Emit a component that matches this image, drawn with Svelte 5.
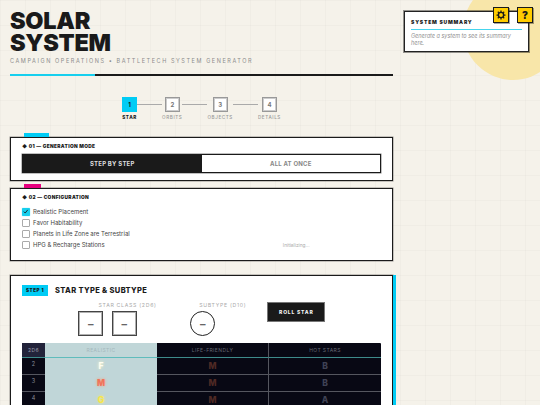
<script>
  const steps = [
    { n: 1, label: 'STAR', active: true },
    { n: 2, label: 'ORBITS' },
    { n: 3, label: 'OBJECTS' },
    { n: 4, label: 'DETAILS' }
  ];
  const options = [
    { label: 'Realistic Placement', checked: true },
    { label: 'Favor Habitability' },
    { label: 'Planets in Life Zone are Terrestrial' },
    { label: 'HPG & Recharge Stations' }
  ];
  const rows = [
    { roll: 2, a: 'F', ac: 'f', b: 'M', c: 'B' },
    { roll: 3, a: 'M', ac: 'm', b: 'M', c: 'B' },
    { roll: 4, a: 'G', ac: 'g', b: 'M', c: 'A' }
  ];
</script>

<div class="page">
  <div class="sun"></div>

  <aside class="summary">
    <h3>SYSTEM SUMMARY</h3>
    <p>Generate a system to see its summary here.</p>
  </aside>
  <button class="fab gear" aria-label="Settings">
    <svg viewBox="0 0 16 16" width="10" height="10">
      <circle cx="8" cy="8" r="4.2" fill="none" stroke="#1a1a1a" stroke-width="2.2" />
      <g stroke="#1a1a1a" stroke-width="2">
        <path d="M8 0.8v2.4M8 12.8v2.4M0.8 8h2.4M12.8 8h2.4M2.9 2.9l1.7 1.7M11.4 11.4l1.7 1.7M2.9 13.1l1.7-1.7M11.4 4.6l1.7-1.7" />
      </g>
    </svg>
  </button>
  <button class="fab help">?</button>

  <main class="main">
    <header class="head">
      <h1>SOLAR<br />SYSTEM</h1>
      <p class="sub">CAMPAIGN OPERATIONS • BATTLETECH SYSTEM GENERATOR</p>
      <div class="rule"><span></span></div>
    </header>

    <nav class="stepper">
      {#each steps as s, i}
        {#if i > 0}<div class="link"></div>{/if}
        <div class="step" class:active={s.active}>
          <div class="box">{s.n}</div>
          <div class="lab">{s.label}</div>
        </div>
      {/each}
    </nav>

    <section class="panel first">
      <i class="tab cyan"></i>
      <h2>◆ 01 — GENERATION MODE</h2>
      <div class="toggle">
        <div class="seg on">STEP BY STEP</div>
        <div class="seg">ALL AT ONCE</div>
      </div>
    </section>

    <section class="panel second">
      <i class="tab pink"></i>
      <h2>◆ 02 — CONFIGURATION</h2>
      <div class="config">
        <ul>
          {#each options as o}
            <li>
              <span class="cb" class:checked={o.checked}>
                {#if o.checked}
                  <svg viewBox="0 0 10 10" width="7" height="7"><path d="M1.5 5.2 4 7.8 8.6 2" fill="none" stroke="#1a1a1a" stroke-width="1.6" /></svg>
                {/if}
              </span>
              {o.label}
            </li>
          {/each}
        </ul>
        <span class="init">Initializing...</span>
      </div>
    </section>

    <section class="panel third">
      <div class="title"><span class="badge">STEP 1</span><h3>STAR TYPE &amp; SUBTYPE</h3></div>
      <div class="dice">
        <div class="group g1">
          <div class="cap">STAR CLASS (2D6)</div>
          <div class="pair"><div class="die">–</div><div class="die">–</div></div>
        </div>
        <div class="group g2">
          <div class="cap">SUBTYPE (D10)</div>
          <div class="pair"><div class="die round">–</div></div>
        </div>
        <button class="roll">ROLL STAR</button>
      </div>
      <div class="table">
        <div class="cell hd num">2D6</div>
        <div class="cell hd real">REALISTIC</div>
        <div class="cell hd">LIFE-FRIENDLY</div>
        <div class="cell hd">HOT STARS</div>
        {#each rows as r}
          <div class="cell num">{r.roll}</div>
          <div class="cell real val {r.ac}">{r.a}</div>
          <div class="cell val dimred">{r.b}</div>
          <div class="cell val dimblue">{r.c}</div>
        {/each}
      </div>
    </section>
  </main>
</div>

<style>
  :global(body) { margin: 0; overflow: hidden; }
  .page {
    position: relative;
    width: 540px;
    height: 405px;
    overflow: hidden;
    box-sizing: border-box;
    padding-left: 10px;
    font-family: Inter, "Liberation Sans", sans-serif;
    color: #1a1a1a;
    background-color: #f5f2ea;
    background-image:
      linear-gradient(rgba(0,0,0,.018) 1px, transparent 1px),
      linear-gradient(90deg, rgba(0,0,0,.018) 1px, transparent 1px);
    background-size: 25px 25px;
  }
  .sun {
    position: absolute;
    left: 463px;
    top: -20px;
    width: 100px;
    height: 100px;
    border-radius: 50%;
    background: #f8e6a9;
  }
  .summary {
    position: absolute;
    left: 404px;
    top: 11px;
    width: 125px;
    height: 41px;
    box-sizing: border-box;
    padding: 7px 6px;
    background: #fff;
    border: 1px solid #222;
    box-shadow: 0 0 0 1px rgba(0,0,0,.4);
  }
  .summary h3 {
    margin: 0;
    font-size: 5px;
    font-weight: 900;
    letter-spacing: .8px;
    line-height: 7px;
    padding-bottom: 3px;
    border-bottom: 1.3px solid #45d5ee;
  }
  .summary p {
    margin: 3px 0 0;
    font-size: 5.5px;
    line-height: 6.5px;
    font-style: italic;
    color: #8f8f8f;
  }
  .fab {
    position: absolute;
    top: 7px;
    width: 16px;
    height: 16px;
    padding: 0;
    display: flex;
    align-items: center;
    justify-content: center;
    background: #ffcc00;
    border: 1px solid #1a1a1a;
    font: 900 10px Inter, sans-serif;
    color: #1a1a1a;
    box-shadow: 1px 1px 0 rgba(0,0,0,.35);
  }
  .gear { left: 493px; }
  .help { left: 517px; }

  .main { position: relative; width: 383px; }
  .head { padding-top: 10px; }
  h1 {
    margin: 0;
    font-size: 23.5px;
    line-height: 21.7px;
    font-weight: 900;
    letter-spacing: -0.3px;
  }
  .sub {
    margin: 4px 0 0;
    font-size: 5.5px;
    line-height: 8px;
    letter-spacing: 1.58px;
    color: #8c8c8c;
  }
  .rule {
    margin-top: 9px;
    height: 2px;
    background: #1a1a1a;
  }
  .rule span {
    display: block;
    width: 85px;
    height: 2px;
    background: #17cfee;
  }

  .stepper {
    display: flex;
    justify-content: center;
    align-items: flex-start;
    margin-top: 21px;
  }
  .step { display: flex; flex-direction: column; align-items: center; }
  .box {
    width: 15px;
    height: 15px;
    box-sizing: border-box;
    border: 1px solid #999;
    box-shadow: inset 0 0 0 1px rgba(153,153,153,.5);
    background: #fff;
    font-size: 6px;
    font-weight: 700;
    color: #777;
    display: flex;
    align-items: center;
    justify-content: center;
  }
  .active .box { background: #00ccf5; border-color: #00ccf5; box-shadow: none; color: #1a1a1a; }
  .lab {
    margin-top: 2px;
    font-size: 4.6px;
    line-height: 7px;
    letter-spacing: .6px;
    color: #999;
    white-space: nowrap;
    font-weight: 500;
  }
  .active .lab { color: #1a1a1a; font-weight: 800; }
  .link { width: 25px; height: 1px; background: #aaa; margin-top: 7px; }

  .panel {
    position: relative;
    box-sizing: border-box;
    background: #fff;
    border: 1px solid #1a1a1a;
    box-shadow: 0 0 0 .5px rgba(0,0,0,.4);
  }
  .tab { position: absolute; top: -5px; left: 13px; height: 4px; }
  .cyan { width: 25px; background: #00ccf5; }
  .pink { width: 17px; background: #e6007e; }
  .first { margin-top: 16px; height: 44px; padding: 5px 11px 0; }
  .second { margin-top: 7px; height: 73px; padding: 5px 11px 0; }
  h2 {
    margin: 0;
    font-size: 4.8px;
    line-height: 7px;
    font-weight: 900;
    letter-spacing: .34px;
  }
  .toggle {
    display: flex;
    margin-top: 4px;
    height: 19px;
    border: 1px solid #1a1a1a;
    box-shadow: 0 0 0 .5px rgba(0,0,0,.5);
    box-sizing: border-box;
  }
  .seg {
    flex: 1;
    display: flex;
    align-items: center;
    justify-content: center;
    font-size: 6px;
    font-weight: 700;
    letter-spacing: .2px;
    color: #888;
  }
  .seg.on { background: #1a1a1a; color: #ddd; }

  .config {
    display: grid;
    grid-template-columns: 1fr 1fr;
    margin-top: 5px;
  }
  ul { list-style: none; margin: 0; padding: 0; }
  li {
    display: flex;
    align-items: center;
    gap: 3.5px;
    height: 11px;
    font-size: 6px;
    color: #444;
    white-space: nowrap;
  }
  .cb {
    width: 7.5px;
    height: 7.5px;
    box-sizing: border-box;
    border: 1px solid #aaa;
    border-radius: 1px;
    background: #fff;
    display: flex;
    align-items: center;
    justify-content: center;
  }
  .cb.checked { background: #17cfee; border-color: #17cfee; box-shadow: 0 0 1px #17cfee; }
  .init {
    justify-self: center;
    align-self: end;
    margin: 0 0 0 10px;
    padding-bottom: 1px;
    font-size: 4.8px;
    line-height: 7px;
    color: #aaa;
  }

  .third {
    margin-top: 14px;
    height: 200px;
    padding: 9px 11px 0;
    box-shadow: 3px 0 0 #00ccf5, 0 0 0 .5px rgba(0,0,0,.4);
  }
  .title { display: flex; align-items: center; gap: 7px; height: 11px; }
  .badge {
    box-sizing: border-box;
    height: 11px;
    width: 26px;
    display: flex;
    align-items: center;
    justify-content: center;
    background: #00ccf5;
    font-size: 4.6px;
    font-weight: 900;
    letter-spacing: .5px;
  }
  .title h3 {
    margin: 0;
    font-size: 7.5px;
    font-weight: 800;
    letter-spacing: .35px;
    line-height: 10px;
    white-space: nowrap;
  }
  .dice {
    display: flex;
    align-items: flex-start;
    margin-top: 6px;
    padding-left: 36.5px;
    height: 34px;
  }
  .group { display: flex; flex-direction: column; align-items: center; gap: 2px; }
  .g1 { margin-right: 2.5px; }
  .g2 { margin-right: 21px; }
  .cap {
    margin-left: 40px;
    font-size: 5.2px;
    line-height: 7px;
    letter-spacing: .7px;
    color: #aaa;
    white-space: nowrap;
  }
  .pair { display: flex; gap: 8.5px; }
  .die {
    width: 25px;
    height: 25px;
    box-sizing: border-box;
    border: 1px solid #444;
    box-shadow: inset 0 0 0 1px rgba(80,80,80,.45);
    display: flex;
    align-items: center;
    justify-content: center;
    font-size: 11px;
    font-weight: 700;
    color: #666;
    background: #fff;
  }
  .round { border-radius: 50%; border-color: #222; box-shadow: none; }
  .roll {
    width: 58px;
    height: 20px;
    border: 1px solid #777;
    background: #1a1a1a;
    color: #f2f2f2;
    font: 800 5px Inter, sans-serif;
    letter-spacing: .8px;
  }
  .table {
    display: grid;
    grid-template-columns: 23px 112px 112px 112px;
    margin-top: 7px;
    background: #080814;
    border-radius: 1px;
  }
  .cell {
    height: 17px;
    display: flex;
    align-items: center;
    justify-content: center;
    box-sizing: border-box;
    border-bottom: 1px solid #55565f;
    font-size: 5px;
    color: #70727f;
  }
  .cell:nth-child(4n+3) { border-right: 1px solid #55565f; }
  .hd {
    height: 15px;
    letter-spacing: .4px;
    border-bottom-color: #3e8b8b;
    color: #666874;
  }
  .num { color: #8a8c98; font-size: 5.5px; padding-bottom: 4px; }
  .hd.num { background: #22233a; color: #9a9cab; font-size: 5px; padding-bottom: 0; }
  .real { background: #c0d6d8; color: #a5b8bd; border-bottom-color: #c0d6d8; }
  .hd.real { border-bottom-color: #5fbcbc; }
  .val { font-size: 8.5px; font-weight: 800; }
  .real.f { color: #fdfdf2; text-shadow: 0 0 3px #fff6c0; }
  .real.m { color: #f0735a; text-shadow: 0 0 3px #ff9a70; }
  .real.g { color: #f5e64a; text-shadow: 0 0 3px #ffe96b; }
  .dimred { color: #4f2a24; }
  .dimblue { color: #3f4255; }
</style>
